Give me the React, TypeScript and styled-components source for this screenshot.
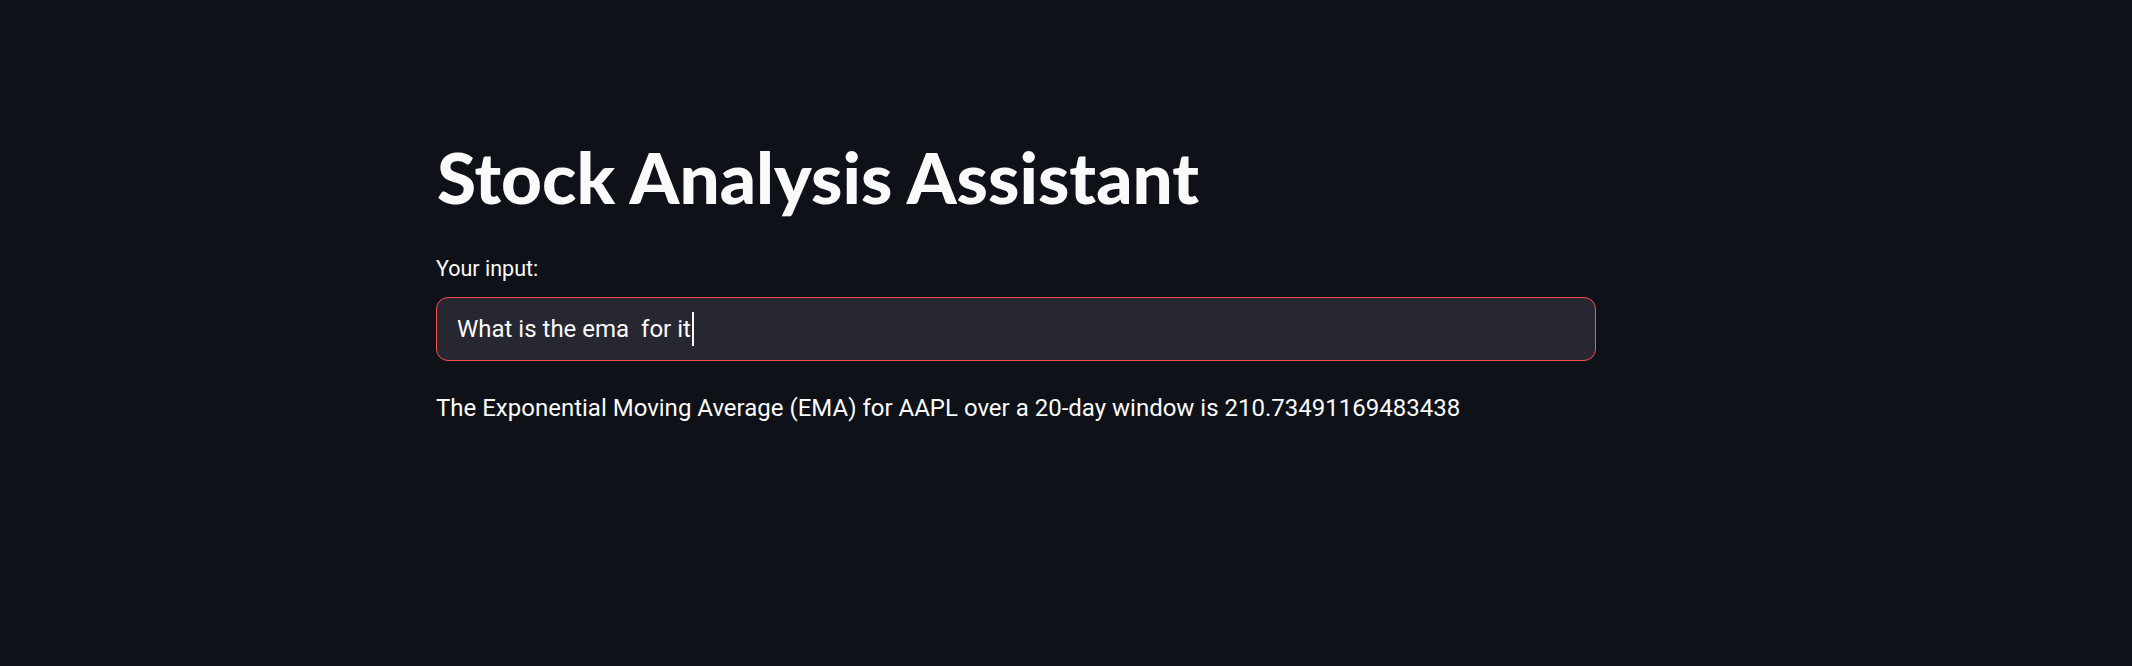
import React from "react";
import styled, { createGlobalStyle } from "styled-components";

const GlobalStyle = createGlobalStyle`
  html, body {
    margin: 0;
    padding: 0;
    background: #0e1117;
  }
  body {
    font-family: Roboto, "Liberation Sans", sans-serif;
    color: #fafafa;
  }
`;

const Page = styled.div`
  min-height: 666px;
  background: #0e1117;
  display: flex;
  flex-direction: column;
  box-sizing: border-box;
  padding: 135px 0 0 436px;
`;

const Main = styled.main`
  width: 1160px;
  display: flex;
  flex-direction: column;
`;

const Title = styled.h1`
  margin: 0;
  font-family: Lato, Roboto, sans-serif;
  font-weight: 900;
  font-size: 71px;
  line-height: 84px;
  color: #fafafa;
  padding-left: 1px;
`;

const Label = styled.label`
  margin-top: 35px;
  font-size: 21.5px;
  line-height: 30px;
  color: #fafafa;
`;

const InputBox = styled.div`
  margin-top: 13px;
  height: 64px;
  box-sizing: border-box;
  border: 1px solid #ff4b4b;
  border-radius: 12px;
  background: #262730;
  display: flex;
  align-items: center;
  padding: 0 20px;
  font-size: 24px;
  line-height: 28px;
  white-space: pre;
  color: #fafafa;
`;

const Caret = styled.span`
  display: inline-block;
  width: 2px;
  height: 34px;
  background: #fafafa;
  margin-left: 1px;
`;

const Answer = styled.p`
  margin: 29px 0 0;
  font-size: 24px;
  line-height: 36px;
  color: #fafafa;
`;

export default function App() {
  return (
    <>
      <GlobalStyle />
      <Page>
        <Main>
          <Title>Stock Analysis Assistant</Title>
          <Label>Your input:</Label>
          <InputBox>
            {"What is the ema  for it"}
            <Caret />
          </InputBox>
          <Answer>
            The Exponential Moving Average (EMA) for AAPL over a 20-day window is 210.73491169483438
          </Answer>
        </Main>
      </Page>
    </>
  );
}
